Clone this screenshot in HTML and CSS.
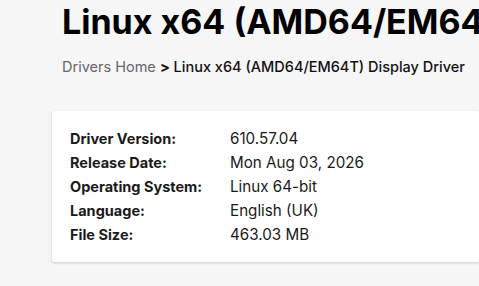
FILE: index.html
```html
<!DOCTYPE html>
<html lang="en">
<head>
<meta charset="utf-8">
<title>Linux x64 Display Driver</title>
<link rel="stylesheet" href="styles.css">
</head>
<body>
<main class="page">
  <h1 class="title">Linux x64 (AMD64/EM64T) Display Driver</h1>
  <nav class="crumbs"><a class="crumb-link" href="#">Drivers Home</a> <span class="crumb-current"><b class="crumb-sep">&gt;</b> Linux x64 (AMD64/EM64T) Display Driver</span></nav>
  <section class="card">
    <dl class="specs">
      <dt>Driver Version:</dt><dd>610.57.04</dd>
      <dt>Release Date:</dt><dd>Mon Aug 03, 2026</dd>
      <dt>Operating System:</dt><dd>Linux 64-bit</dd>
      <dt>Language:</dt><dd>English (UK)</dd>
      <dt>File Size:</dt><dd>463.03 MB</dd>
    </dl>
  </section>
</main>
</body>
</html>
```
FILE: styles.css
```css
html, body {
  margin: 0;
  padding: 0;
  background: #f6f6f6;
  overflow: hidden;
}
body {
  font-family: Inter, "Noto Sans", sans-serif;
  color: #1a1a1a;
  width: 479px;
  height: 286px;
}
.page {
  padding: 0 0 0 52px;
}
.title {
  margin: 0;
  padding: 2px 0 0 10px;
  font-size: 34px;
  font-weight: 700;
  line-height: 40px;
  white-space: nowrap;
  color: #000;
}
.crumbs {
  padding: 14px 0 0 10px;
  font-size: 14.5px;
  line-height: 22px;
  white-space: nowrap;
}
.crumb-link {
  color: #666;
  text-decoration: none;
}
.crumb-current {
  color: #111;
  font-weight: 500;
}
.crumb-sep {
  font-weight: 700;
}
.card {
  margin-top: 33px;
  background: #fff;
  border-radius: 2px;
  box-shadow: 0 1px 3px rgba(0,0,0,0.18);
  height: 151px;
  padding: 16px 18px;
  box-sizing: border-box;
}
.specs {
  margin: 0;
  display: grid;
  grid-template-columns: 160px auto;
  row-gap: 0;
  font-size: 15px;
  line-height: 24px;
}
.specs dt {
  font-weight: 700;
  font-size: 14.5px;
}
.specs dd {
  margin: 0;
  font-size: 15.2px;
}
```
